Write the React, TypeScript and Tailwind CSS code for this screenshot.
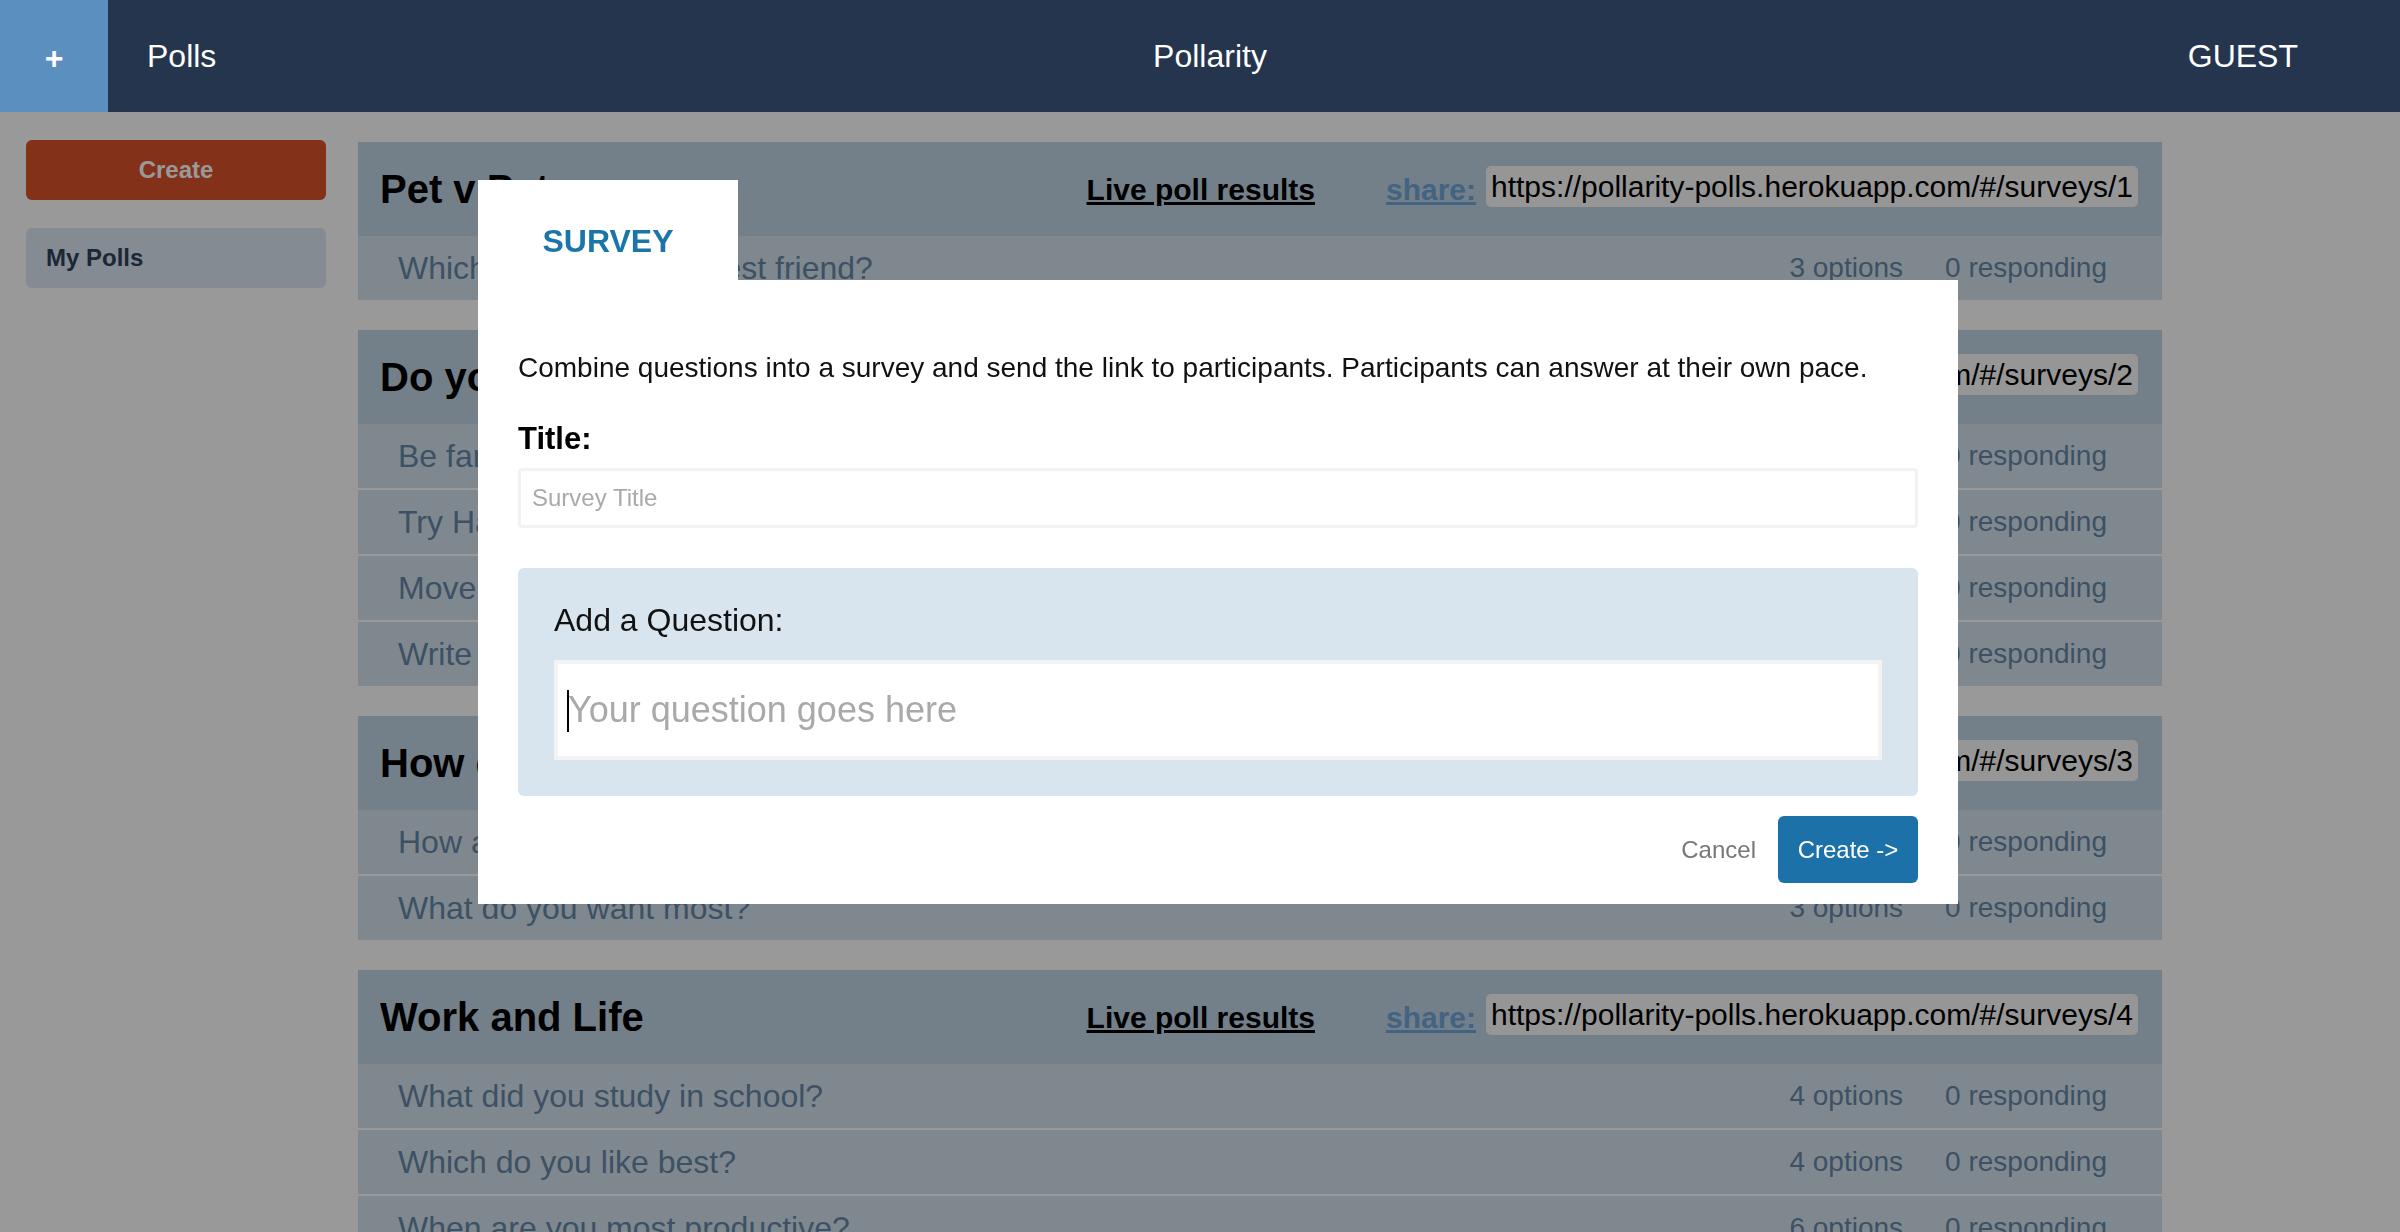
import React from 'react';

type Question = { text: string; options: number; responding: number };
type Poll = { id: number; title: string; questions: Question[] };

const polls: Poll[] = [
  {
    id: 1,
    title: 'Pet v Pet',
    questions: [{ text: 'Which pet makes the best friend?', options: 3, responding: 0 }],
  },
  {
    id: 2,
    title: 'Do you have a bucket list?',
    questions: [
      { text: 'Be famous for something', options: 2, responding: 0 },
      { text: 'Try Hang gliding', options: 2, responding: 0 },
      { text: 'Move to another country', options: 2, responding: 0 },
      { text: 'Write a book', options: 2, responding: 0 },
    ],
  },
  {
    id: 3,
    title: 'How do you feel?',
    questions: [
      { text: 'How are you feeling today?', options: 4, responding: 0 },
      { text: 'What do you want most?', options: 3, responding: 0 },
    ],
  },
  {
    id: 4,
    title: 'Work and Life',
    questions: [
      { text: 'What did you study in school?', options: 4, responding: 0 },
      { text: 'Which do you like best?', options: 4, responding: 0 },
      { text: 'When are you most productive?', options: 6, responding: 0 },
      { text: 'How many hours do you work?', options: 5, responding: 0 },
    ],
  },
];

const PollCard: React.FC<{ poll: Poll }> = ({ poll }) => (
  <div className="mb-[30px]">
    {/* Card header */}
    <div className="flex h-[94px] items-center bg-[#c0d5e6] pl-[22px] pr-[24px]">
      <h2 className="flex-1 truncate text-[40px] font-bold text-black">{poll.title}</h2>
      <a className="text-[30px] font-bold text-black underline">Live poll results</a>
      <a className="ml-[71px] text-[30px] font-bold text-[#6fa5d8] underline">share:</a>
      <span className="ml-[10px] -mt-[5px] rounded-[5px] bg-[#fbfbfb] px-[5px] text-[30px] leading-[41px] text-black">
        https://pollarity-polls.herokuapp.com/#/surveys/{poll.id}
      </span>
    </div>

    {/* Questions, separated by a 2px gap */}
    {poll.questions.map((q, i) => (
      <div
        key={i}
        className={`flex h-[64px] items-center justify-between bg-[#d6e3ee] pl-[40px] pr-[55px] text-[#6687a8] ${
          i > 0 ? 'mt-[2px]' : ''
        }`}
      >
        <span className="text-[32px]">{q.text}</span>
        <div className="flex gap-[42px] text-[28px]">
          <span>{q.options} options</span>
          <span>{q.responding} responding</span>
        </div>
      </div>
    ))}
  </div>
);

const SurveyModal: React.FC = () => (
  <div className="absolute left-[478px] top-[180px] z-30 w-[1480px]">
    {/* Tab */}
    <div className="flex h-[100px] w-[260px] justify-center bg-white pt-[43px]">
      <span className="text-[32px] font-bold leading-[37px] text-[#1b75aa]">SURVEY</span>
    </div>

    <div className="bg-white px-[40px] pb-[21px] pt-[72px]">
      <p className="text-[28px] leading-[32px] text-[#111]">
        Combine questions into a survey and send the link to participants. Participants can answer at their own pace.
      </p>

      <label className="mt-[37px] block text-[31px] font-bold leading-[36px] text-black">Title:</label>
      <input
        className="mt-[11px] h-[60px] w-full rounded-[4px] border-[3px] border-[#f2f2f2] bg-white px-[11px] text-[24px] outline-none placeholder:text-[#aaaaaa]"
        placeholder="Survey Title"
      />

      {/* Question panel */}
      <div className="mt-[40px] rounded-[6px] bg-[#d8e4ee] px-[36px] pb-[36px] pt-[34px]">
        <div className="text-[32px] leading-[36px] text-[#111]">Add a Question:</div>
        <div className="relative mt-[22px]">
          <input
            className="h-[100px] w-full border-[4px] border-[#f3f3f3] bg-white pl-[10px] text-[36px] outline-none placeholder:text-[#a9a9a9]"
            placeholder="Your question goes here"
          />
          <span className="pointer-events-none absolute left-[13px] top-[30px] h-[42px] w-[2px] bg-black" />
        </div>
      </div>

      {/* Actions */}
      <div className="mt-[20px] flex items-center justify-end gap-[22px]">
        <button className="text-[24px] text-[#777777]">Cancel</button>
        <button className="h-[67px] w-[140px] rounded-[6px] bg-[#1c72a8] text-[24px] text-white">Create -&gt;</button>
      </div>
    </div>
  </div>
);

const App: React.FC = () => {
  return (
    <div className="relative h-screen overflow-hidden bg-white font-['Liberation_Sans',Arial,sans-serif]">
      {/* Top bar */}
      <header className="relative z-20 flex h-[112px] items-center bg-[#25354d] text-[32px] text-white">
        <div className="flex flex-1 items-center">
          <div className="flex h-[112px] w-[108px] items-center justify-center bg-[#5b8fc0] pt-[4px] font-bold">+</div>
          <span className="ml-[39px]">Polls</span>
        </div>
        <span className="pl-[20px]">Pollarity</span>
        <div className="flex flex-1 justify-end">
          <span className="mr-[102px]">GUEST</span>
        </div>
      </header>

      <div className="flex">
        {/* Sidebar */}
        <aside className="ml-[26px] w-[300px] shrink-0 pt-[28px]">
          <button className="h-[60px] w-full rounded-[6px] bg-[#dc522b] text-[24px] font-bold text-white">Create</button>
          <div className="mt-[28px] flex h-[60px] items-center rounded-[6px] bg-[#dde8f5] pl-[20px] text-[24px] font-bold text-[#2f4158]">
            My Polls
          </div>
        </aside>

        {/* Polls list */}
        <main className="ml-[32px] w-[1804px] shrink-0 pt-[30px]">
          {polls.map((poll) => (
            <PollCard key={poll.id} poll={poll} />
          ))}
        </main>
      </div>

      {/* Modal backdrop */}
      <div className="fixed inset-0 z-10 bg-black/40" />
      <SurveyModal />
    </div>
  );
};

export default App;
